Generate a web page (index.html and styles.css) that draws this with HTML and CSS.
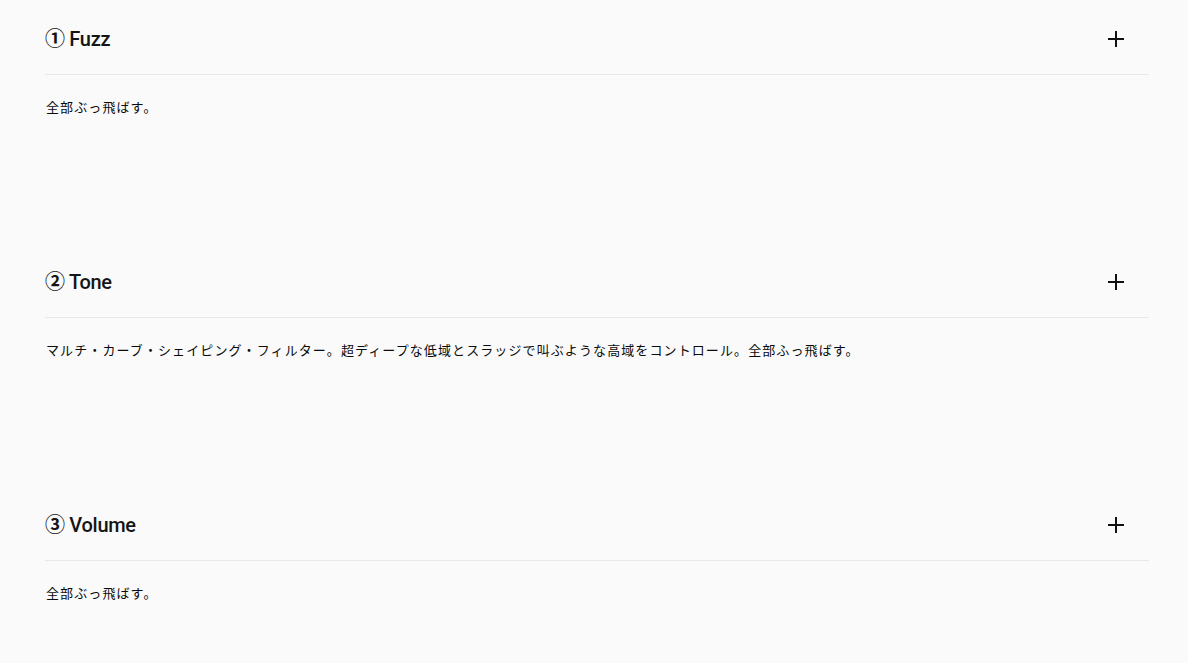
FILE: index.html
```html
<!DOCTYPE html>
<html lang="ja">
<head>
<meta charset="utf-8">
<link rel="stylesheet" href="styles.css">
</head>
<body>
<div class="list">
  <section class="item">
    <div class="head">
      <h3 class="title"><span class="num">①</span> Fuzz</h3>
      <svg class="plus" width="16" height="16" viewBox="0 0 16 16"><path d="M8 0v16M0 8h16" stroke="#111" stroke-width="2" fill="none"/></svg>
    </div>
    <div class="body"><p>全部ぶっ飛ばす。</p></div>
  </section>
  <section class="item">
    <div class="head">
      <h3 class="title"><span class="num">②</span> Tone</h3>
      <svg class="plus" width="16" height="16" viewBox="0 0 16 16"><path d="M8 0v16M0 8h16" stroke="#111" stroke-width="2" fill="none"/></svg>
    </div>
    <div class="body"><p>マルチ・カーブ・シェイピング・フィルター。超ディープな低域とスラッジで叫ぶような高域をコントロール。全部ふっ飛ばす。</p></div>
  </section>
  <section class="item">
    <div class="head">
      <h3 class="title"><span class="num">③</span> Volume</h3>
      <svg class="plus" width="16" height="16" viewBox="0 0 16 16"><path d="M8 0v16M0 8h16" stroke="#111" stroke-width="2" fill="none"/></svg>
    </div>
    <div class="body"><p>全部ぶっ飛ばす。</p></div>
  </section>
</div>
</body>
</html>
```
FILE: styles.css
```css
html, body {
  margin: 0;
  padding: 0;
  background: #fafafa;
}
body {
  font-family: "Liberation Sans", "Noto Sans CJK JP", sans-serif;
  color: #111;
}
.list {
  padding: 0 39px 0 45px;
}
.item {
  display: block;
}
.head {
  display: flex;
  align-items: center;
  justify-content: space-between;
  height: 28px;
  padding: 25px 25px 21px 0;
  border-bottom: 1px solid #e8e8e8;
}
.title {
  margin: 0;
  font-family: Roboto, "Noto Sans CJK JP", sans-serif;
  font-size: 20px;
  line-height: 28px;
  font-weight: 500;
  letter-spacing: -0.3px;
  color: #151515;
}
.num {
  font-family: "Noto Sans CJK JP", sans-serif;
  font-weight: 700;
  line-height: 1;
}
.plus {
  display: block;
}
.body {
  padding: 22px 0 0 1px;
  height: 146px;
}
.body p {
  margin: 0;
  font-family: "Noto Sans CJK JP", sans-serif;
  font-size: 13px;
  line-height: 20px;
  letter-spacing: 1.1px;
  color: #0a0a0a;
}
```
